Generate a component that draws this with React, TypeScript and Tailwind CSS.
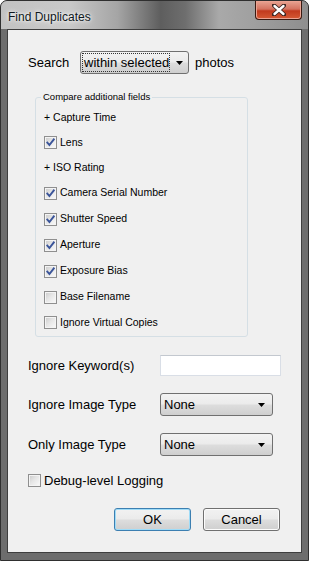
import React from "react";

const body = "font-['Liberation_Sans',Arial,sans-serif] text-[13px] text-black";

function Check({ checked }: { checked?: boolean }) {
  return (
    <div className="w-[13px] h-[13px] shrink-0 border border-[#8f8f8f] bg-[#f4f4f4] p-px">
      <div className="w-full h-full relative bg-[linear-gradient(135deg,#cfcfcf_0%,#e6e6e6_45%,#f7f7f7_100%)]">
        {checked && (
          <svg viewBox="0 0 9 9" className="absolute inset-0 w-[9px] h-[9px]">
            <path d="M1.3 4.6 L3.4 7 L7.8 1.4" fill="none" stroke="#3b559a" strokeWidth="1.9" strokeLinecap="square" />
          </svg>
        )}
      </div>
    </div>
  );
}

function Combo({ text, width, focused }: { text: string; width: string; focused?: boolean }) {
  return (
    <div className={`${width} h-[23px] shrink-0 rounded-[3px] border border-[#707070] bg-[linear-gradient(#f3f3f3_0%,#ebebeb_48%,#dddddd_52%,#cfcfcf_100%)] flex items-center pl-px pr-[7px]`}>
      <div className={`flex-1 h-[19px] flex items-center pl-px whitespace-nowrap ${focused ? "border border-dotted border-[#333]" : "border border-transparent pl-[3px]"}`}>
        <span className="leading-none">{text}</span>
      </div>
      <svg width="7" height="4" viewBox="0 0 7 4" className="ml-[6px] shrink-0">
        <path d="M0 0 H7 L3.5 4 Z" fill="#000" />
      </svg>
    </div>
  );
}

function Field({ label, checked }: { label: string; checked?: boolean }) {
  return (
    <div className="flex items-center gap-[3px] whitespace-nowrap">
      <Check checked={checked} />
      <span>{label}</span>
    </div>
  );
}

function Button({ label, primary }: { label: string; primary?: boolean }) {
  return (
    <div
      className={`w-[77px] h-[23px] rounded-[3px] border flex items-center justify-center bg-[linear-gradient(#f2f2f2_0%,#ebebeb_48%,#dddddd_52%,#cfcfcf_100%)] ${
        primary
          ? "border-[#3c7fb1] shadow-[inset_0_0_0_1px_#9fdcf8]"
          : "border-[#707070] shadow-[inset_0_0_0_1px_#fcfcfc]"
      }`}
    >
      {label}
    </div>
  );
}

export default function App() {
  const rows: { label: string; kind: "plus" | "on" | "off"; h: string }[] = [
    { label: "Capture Time", kind: "plus", h: "h-[25px]" },
    { label: "Lens", kind: "on", h: "h-[25px]" },
    { label: "ISO Rating", kind: "plus", h: "h-[25px]" },
    { label: "Camera Serial Number", kind: "on", h: "h-[26px]" },
    { label: "Shutter Speed", kind: "on", h: "h-[26px]" },
    { label: "Aperture", kind: "on", h: "h-[26px]" },
    { label: "Exposure Bias", kind: "on", h: "h-[26px]" },
    { label: "Base Filename", kind: "off", h: "h-[26px]" },
    { label: "Ignore Virtual Copies", kind: "off", h: "h-[25px]" },
  ];

  return (
    <div className="w-[309px] h-[561px] rounded-t-[7px] border border-[#2f2f2f] bg-[#6d6d6d] flex flex-col overflow-hidden">
      {/* title bar */}
      <div className="h-[28px] shrink-0 flex bg-[linear-gradient(90deg,#c2c2c2_0%,#c9c9c9_22%,#a5a5a5_38%,#5e5e5e_52%,#6e6e6e_60%,#a9a9a9_71%,#a0a0a0_82%,#8e8e8e_100%)]">
        <div className="flex-1 pl-[7px] pt-[6px] leading-none">
          <span className="font-['Liberation_Sans',sans-serif] text-[12px] leading-none text-[#101820] [text-shadow:0_0_6px_#ffffff,0_0_3px_#ffffff]">
            Find Duplicates
          </span>
        </div>
        <div className="w-[47px] h-[19px] mr-[6px] rounded-b-[4px] border border-t-0 border-[#3a1a12] bg-[linear-gradient(#e8a493_0%,#d47360_45%,#c23a1e_55%,#d55a35_100%)] flex items-center justify-center shadow-[inset_0_0_0_1px_#eba392]">
          <svg width="14" height="12" viewBox="0 0 14 12">
            <path d="M2 1.5 L12 10.5 M12 1.5 L2 10.5" stroke="#3a2420" strokeWidth="4.2" strokeLinecap="round" />
            <path d="M2.5 2 L11.5 10 M11.5 2 L2.5 10" stroke="#ffffff" strokeWidth="2.4" strokeLinecap="round" />
          </svg>
        </div>
      </div>

      {/* client area */}
      <div className="flex-1 mx-[6px] mb-[7px] border border-[#3e3e3e] bg-[#f0f0f0]">
        <div className={`${body} pl-[20px] pt-[21px] flex flex-col`}>
          <div className="flex items-center h-[23px]">
            <span className="w-[52px]">Search</span>
            <Combo text="within selected" width="w-[109px]" focused />
            <span className="ml-[6px]">photos</span>
          </div>

          <div className="relative mt-[23px] ml-[7px] w-[213px] h-[240px] rounded-[3px] border border-[#d5dfe5] pl-[8px] pt-[7px] flex flex-col text-[10.5px]">
            <span className="absolute -top-[7px] left-[5px] px-[2px] bg-[#f0f0f0] text-[9.5px] leading-[12px]">
              Compare additional fields
            </span>
            {rows.map((r) => (
              <div key={r.label} className={`${r.h} flex items-center`}>
                {r.kind === "plus" ? <span>+ {r.label}</span> : <Field label={r.label} checked={r.kind === "on"} />}
              </div>
            ))}
          </div>

          <div className="mt-[18px] flex items-center h-[21px]">
            <span className="w-[132px]">Ignore Keyword(s)</span>
            <div className="w-[121px] h-[21px] border border-[#d9dee6] border-t-[#c3c8cf] bg-white" />
          </div>

          <div className="mt-[17px] flex items-center">
            <span className="w-[132px]">Ignore Image Type</span>
            <Combo text="None" width="w-[113px]" />
          </div>

          <div className="mt-[17px] flex items-center">
            <span className="w-[132px]">Only Image Type</span>
            <Combo text="None" width="w-[113px]" />
          </div>

          <div className="mt-[17px] h-[15px] flex items-center">
            <Field label="Debug-level Logging" />
          </div>

          <div className="mt-[20px] flex justify-end gap-[12px] pr-[21px]">
            <Button label="OK" primary />
            <Button label="Cancel" />
          </div>
        </div>
      </div>
    </div>
  );
}
